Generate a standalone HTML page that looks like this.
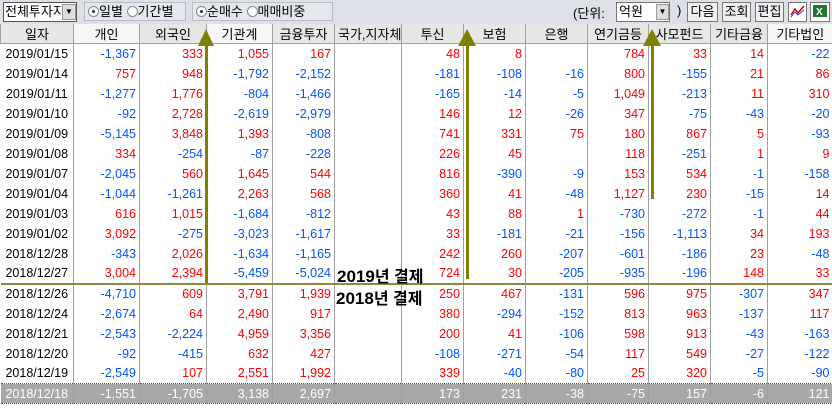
<!DOCTYPE html>
<html><head><meta charset="utf-8"><style>
*{margin:0;padding:0;box-sizing:border-box}
body{width:832px;height:411px;overflow:hidden;background:#fff;font-family:"Liberation Sans","Noto Sans CJK KR","NanumGothic",sans-serif;font-size:12px;position:relative}
.tb{position:absolute;left:0;top:0;width:832px;height:24px;background:#dde1e7}
.abs{position:absolute}
.box{border:1px solid #b8bcc4;background:#e4e7ec}
.btn{position:absolute;top:2px;height:20px;border:1px solid #777;background:#f0f0f0;text-align:center;line-height:18px;font-size:13px}
.rad{display:inline-block;width:11px;height:11px;border-radius:50%;border:1px solid #888;background:#fff;vertical-align:-1px;position:relative}
.rad.on::after{content:"";position:absolute;left:3px;top:3px;width:3px;height:3px;border-radius:50%;background:#333}
table{position:absolute;left:0;top:24px;border-collapse:collapse;table-layout:fixed;width:832px}
td,th{height:20px;border-left:1px solid #a0a0a0;padding:0 3px;text-align:right;white-space:nowrap;font-weight:normal;font-size:12.5px;overflow:hidden}
th{background:#e6e6e6;text-align:center;border-bottom:1px solid #a0a0a0;height:19px;font-size:13px}
th.w{background:#f6f6f6}
td:first-child{text-align:center;color:#000;border-left:none}
.r{color:#f00}.b{color:#0055ff}
tr.sep td{border-bottom:2px solid #8a8a3a}
tr.g td{background:#a8a8a8;color:#fff;border-top:1px dotted #555;border-bottom:1px dotted #555}
.big{position:absolute;font-weight:bold;font-size:17px;color:#000}
.big span{font-size:16px;font-weight:bold}
</style></head><body>
<div class="tb">
 <div class="abs" style="left:3px;top:2px;width:74px;height:20px;border:1px solid #555;background:#fff;font-size:13px;line-height:18px;padding-left:1px">전체투자지</div>
 <div class="abs" style="left:62px;top:4px;width:14px;height:16px;background:#ddd;border:1px solid #999;font-size:8px;text-align:center;line-height:14px">▼</div>
 <div class="abs box" style="left:84px;top:2px;width:102px;height:19px;font-size:13px;line-height:17px;padding-left:3px"><span class="rad on"></span>일별 <span class="rad"></span>기간별</div>
 <div class="abs box" style="left:192px;top:2px;width:141px;height:19px;font-size:13px;line-height:17px;padding-left:3px"><span class="rad on"></span>순매수 <span class="rad"></span>매매비중</div>
 <div class="abs" style="left:573px;top:3px;font-size:13px">(단위:</div>
 <div class="abs" style="left:616px;top:2px;width:54px;height:20px;border:1px solid #777;background:#fff;font-size:13px;line-height:18px;padding-left:2px">억원</div>
 <div class="abs" style="left:656px;top:4px;width:13px;height:16px;background:#ddd;border:1px solid #999;font-size:8px;text-align:center;line-height:14px">▼</div>
 <div class="abs" style="left:677px;top:3px;font-size:13px">)</div>
 <div class="btn" style="left:687px;width:31px">다음</div>
 <div class="btn" style="left:722px;width:29px">조회</div>
 <div class="btn" style="left:755px;width:29px">편집</div>
 <div class="btn" style="left:788px;width:19px;background:#fff"><svg width="17" height="16"><path d="M2 12 L6 6 L9 10 L15 3" stroke="#d00" fill="none" stroke-width="1.5"/><path d="M2 14 L6 9 L9 12 L15 7" stroke="#33c" fill="none"/></svg></div>
 <div class="btn" style="left:810px;width:20px;background:#fff"><svg width="18" height="16"><rect x="2" y="2" width="14" height="12" fill="#1e7a2e"/><text x="5" y="12" font-size="10" fill="#fff" font-family="Liberation Sans" font-weight="bold">X</text></svg></div>
</div>
<table>
<colgroup><col style="width:73px"><col style="width:66px"><col style="width:67px"><col style="width:66px"><col style="width:62px"><col style="width:67px"><col style="width:62px"><col style="width:62px"><col style="width:62px"><col style="width:61px"><col style="width:62px"><col style="width:57px"><col style="width:65px"></colgroup>
<tr><th>일자</th><th class="w">개인</th><th>외국인</th><th class="w">기관계</th><th>금융투자</th><th>국가,지자체</th><th>투신</th><th>보험</th><th>은행</th><th>연기금등</th><th>사모펀드</th><th>기타금융</th><th class="w">기타법인</th></tr>
<tr><td>2019/01/15</td><td class="b">-1,367</td><td class="r">333</td><td class="r">1,055</td><td class="r">167</td><td></td><td class="r">48</td><td class="r">8</td><td></td><td class="r">784</td><td class="r">33</td><td class="r">14</td><td class="b">-22</td></tr>
<tr><td>2019/01/14</td><td class="r">757</td><td class="r">948</td><td class="b">-1,792</td><td class="b">-2,152</td><td></td><td class="b">-181</td><td class="b">-108</td><td class="b">-16</td><td class="r">800</td><td class="b">-155</td><td class="r">21</td><td class="r">86</td></tr>
<tr><td>2019/01/11</td><td class="b">-1,277</td><td class="r">1,776</td><td class="b">-804</td><td class="b">-1,466</td><td></td><td class="b">-165</td><td class="b">-14</td><td class="b">-5</td><td class="r">1,049</td><td class="b">-213</td><td class="r">11</td><td class="r">310</td></tr>
<tr><td>2019/01/10</td><td class="b">-92</td><td class="r">2,728</td><td class="b">-2,619</td><td class="b">-2,979</td><td></td><td class="r">146</td><td class="r">12</td><td class="b">-26</td><td class="r">347</td><td class="b">-75</td><td class="b">-43</td><td class="b">-20</td></tr>
<tr><td>2019/01/09</td><td class="b">-5,145</td><td class="r">3,848</td><td class="r">1,393</td><td class="b">-808</td><td></td><td class="r">741</td><td class="r">331</td><td class="r">75</td><td class="r">180</td><td class="r">867</td><td class="r">5</td><td class="b">-93</td></tr>
<tr><td>2019/01/08</td><td class="r">334</td><td class="b">-254</td><td class="b">-87</td><td class="b">-228</td><td></td><td class="r">226</td><td class="r">45</td><td></td><td class="r">118</td><td class="b">-251</td><td class="r">1</td><td class="r">9</td></tr>
<tr><td>2019/01/07</td><td class="b">-2,045</td><td class="r">560</td><td class="r">1,645</td><td class="r">544</td><td></td><td class="r">816</td><td class="b">-390</td><td class="b">-9</td><td class="r">153</td><td class="r">534</td><td class="b">-1</td><td class="b">-158</td></tr>
<tr><td>2019/01/04</td><td class="b">-1,044</td><td class="b">-1,261</td><td class="r">2,263</td><td class="r">568</td><td></td><td class="r">360</td><td class="r">41</td><td class="b">-48</td><td class="r">1,127</td><td class="r">230</td><td class="b">-15</td><td class="r">14</td></tr>
<tr><td>2019/01/03</td><td class="r">616</td><td class="r">1,015</td><td class="b">-1,684</td><td class="b">-812</td><td></td><td class="r">43</td><td class="r">88</td><td class="r">1</td><td class="b">-730</td><td class="b">-272</td><td class="b">-1</td><td class="r">44</td></tr>
<tr><td>2019/01/02</td><td class="r">3,092</td><td class="b">-275</td><td class="b">-3,023</td><td class="b">-1,617</td><td></td><td class="r">33</td><td class="b">-181</td><td class="b">-21</td><td class="b">-156</td><td class="b">-1,113</td><td class="r">34</td><td class="r">193</td></tr>
<tr><td>2018/12/28</td><td class="b">-343</td><td class="r">2,026</td><td class="b">-1,634</td><td class="b">-1,165</td><td></td><td class="r">242</td><td class="r">260</td><td class="b">-207</td><td class="b">-601</td><td class="b">-186</td><td class="r">23</td><td class="b">-48</td></tr>
<tr class="sep"><td>2018/12/27</td><td class="r">3,004</td><td class="r">2,394</td><td class="b">-5,459</td><td class="b">-5,024</td><td></td><td class="r">724</td><td class="r">30</td><td class="b">-205</td><td class="b">-935</td><td class="b">-196</td><td class="r">148</td><td class="r">33</td></tr>
<tr><td>2018/12/26</td><td class="b">-4,710</td><td class="r">609</td><td class="r">3,791</td><td class="r">1,939</td><td></td><td class="r">250</td><td class="r">467</td><td class="b">-131</td><td class="r">596</td><td class="r">975</td><td class="b">-307</td><td class="r">347</td></tr>
<tr><td>2018/12/24</td><td class="b">-2,674</td><td class="r">64</td><td class="r">2,490</td><td class="r">917</td><td></td><td class="r">380</td><td class="b">-294</td><td class="b">-152</td><td class="r">813</td><td class="r">963</td><td class="b">-137</td><td class="r">117</td></tr>
<tr><td>2018/12/21</td><td class="b">-2,543</td><td class="b">-2,224</td><td class="r">4,959</td><td class="r">3,356</td><td></td><td class="r">200</td><td class="r">41</td><td class="b">-106</td><td class="r">598</td><td class="r">913</td><td class="b">-43</td><td class="b">-163</td></tr>
<tr><td>2018/12/20</td><td class="b">-92</td><td class="b">-415</td><td class="r">632</td><td class="r">427</td><td></td><td class="b">-108</td><td class="b">-271</td><td class="b">-54</td><td class="r">117</td><td class="r">549</td><td class="b">-27</td><td class="b">-122</td></tr>
<tr><td>2018/12/19</td><td class="b">-2,549</td><td class="r">107</td><td class="r">2,551</td><td class="r">1,992</td><td></td><td class="r">339</td><td class="b">-40</td><td class="b">-80</td><td class="r">25</td><td class="r">320</td><td class="b">-5</td><td class="b">-90</td></tr>
<tr class="g"><td style="color:#fff">2018/12/18</td><td>-1,551</td><td>-1,705</td><td>3,138</td><td>2,697</td><td></td><td>173</td><td>231</td><td>-38</td><td>-75</td><td>157</td><td>-6</td><td>121</td></tr>
</table>
<div class="big" style="left:337px;top:263px">2019<span>년 결제</span></div>
<div class="big" style="left:336px;top:285px">2018<span>년 결제</span></div>
<svg class="abs" style="left:0;top:0" width="832" height="411">
<g fill="#808000"><rect x="205" y="44" width="3" height="239"/><polygon points="198,46 206,29 214,46"/>
<rect x="466" y="44" width="3" height="235"/><polygon points="458,46 467,29 476,46"/>
<rect x="651" y="44" width="3" height="155"/><polygon points="643,46 652,29 661,46"/></g>
</svg>
</body></html>
